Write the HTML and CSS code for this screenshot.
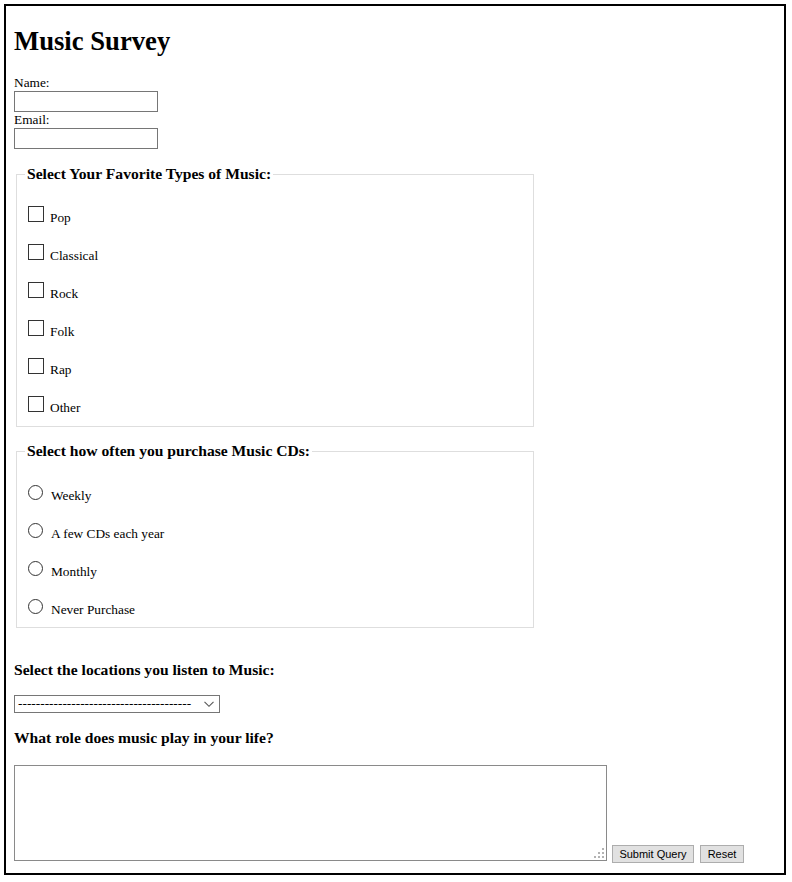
FILE: index.html
```html
<!DOCTYPE html>
<html lang="en">
<head>
<meta charset="utf-8">
<title>Music Survey</title>
<link rel="stylesheet" href="styles.css">
</head>
<body>
<div class="page">
  <h1 class="title">Music Survey</h1>
  <label class="field-label" for="name">Name:</label>
  <input class="text-input" id="name" type="text">
  <label class="field-label" for="email">Email:</label>
  <input class="text-input" id="email" type="text">

  <fieldset class="group group-check">
    <legend class="group-title">Select Your Favorite Types of Music:</legend>
    <div class="options options-check">
      <label class="option"><input class="box" type="checkbox"><span class="opt-text">Pop</span></label>
      <label class="option"><input class="box" type="checkbox"><span class="opt-text">Classical</span></label>
      <label class="option"><input class="box" type="checkbox"><span class="opt-text">Rock</span></label>
      <label class="option"><input class="box" type="checkbox"><span class="opt-text">Folk</span></label>
      <label class="option"><input class="box" type="checkbox"><span class="opt-text">Rap</span></label>
      <label class="option"><input class="box" type="checkbox"><span class="opt-text">Other</span></label>
    </div>
  </fieldset>

  <fieldset class="group group-radio">
    <legend class="group-title">Select how often you purchase Music CDs:</legend>
    <div class="options options-radio">
      <label class="option option-radio"><input class="dot" type="radio" name="freq"><span class="opt-text">Weekly</span></label>
      <label class="option option-radio"><input class="dot" type="radio" name="freq"><span class="opt-text">A few CDs each year</span></label>
      <label class="option option-radio"><input class="dot" type="radio" name="freq"><span class="opt-text">Monthly</span></label>
      <label class="option option-radio"><input class="dot" type="radio" name="freq"><span class="opt-text">Never Purchase</span></label>
    </div>
  </fieldset>

  <h3 class="question q-select">Select the locations you listen to Music:</h3>
  <div class="select-wrap">
    <select class="select">
      <option>---------------------------------------</option>
    </select>
    <svg class="chev" width="11" height="7" viewBox="0 0 11 7"><polyline points="0.5,0.8 5,5.3 9.5,0.8" fill="none" stroke="#555" stroke-width="1.1"/></svg>
  </div>

  <h3 class="question q-text">What role does music play in your life?</h3>
  <div class="answer-row">
    <div class="ta-wrap">
      <textarea class="ta"></textarea>
      <svg class="grip" width="11" height="11" viewBox="0 0 11 11">
        <rect x="8" y="0" width="2" height="2" fill="#b3b3b3"/>
        <rect x="4" y="4" width="2" height="2" fill="#b3b3b3"/>
        <rect x="8" y="4" width="2" height="2" fill="#b3b3b3"/>
        <rect x="0" y="8" width="2" height="2" fill="#b3b3b3"/>
        <rect x="4" y="8" width="2" height="2" fill="#b3b3b3"/>
        <rect x="8" y="8" width="2" height="2" fill="#b3b3b3"/>
      </svg>
    </div>
    <button class="btn btn-submit" type="button">Submit Query</button>
    <button class="btn btn-reset" type="button">Reset</button>
  </div>
</div>
</body>
</html>
```

FILE: styles.css
```css
html, body {
  margin: 0;
  padding: 0;
  background: #fff;
}

body {
  font-family: "Liberation Serif", "Times New Roman", serif;
  font-size: 13.33px;
  color: #000;
}

.page {
  box-sizing: border-box;
  width: 782px;
  height: 871px;
  margin: 4px;
  border: 2px solid #000;
  padding: 0 8px;
  display: flex;
  flex-direction: column;
  align-items: flex-start;
}

.title {
  margin: 20px 0 0 0;
  font-size: 26.67px;
  line-height: 31px;
  font-weight: bold;
}

.field-label {
  display: block;
  margin-top: 18px;
  line-height: 16px;
}

.field-label + .text-input + .field-label {
  margin-top: 0;
}

.text-input {
  box-sizing: border-box;
  width: 144px;
  height: 21px;
  margin: 0;
  border: 1px solid #767676;
  padding: 1px 2px;
  font-family: inherit;
  font-size: 13.33px;
  background: #fff;
}

.group {
  box-sizing: border-box;
  width: 518px;
  margin: 0 0 0 2px;
  border: 1px solid #dedede;
  padding: 23px 8px 14px;
  min-width: 0;
}

.group-check {
  margin-top: 16px;
}

.group-radio {
  margin-top: 15px;
  padding-top: 25px;
  padding-bottom: 13px;
}

.group-title {
  padding: 0 2px;
  font-size: 15.6px;
  line-height: 18px;
  font-weight: bold;
}

.options {
  display: flex;
  flex-direction: column;
  gap: 22px;
}

.options-radio {
  gap: 23px;
}

.option {
  display: flex;
  align-items: baseline;
  height: 16px;
}

.option-radio {
  height: 15px;
}

.opt-text {
  line-height: 16px;
}

.box {
  appearance: none;
  -webkit-appearance: none;
  box-sizing: border-box;
  width: 16px;
  height: 16px;
  margin: 0 6px 0 3px;
  border: 1px solid #333;
  border-radius: 0;
  background: #fff;
  flex: none;
}

.dot {
  appearance: none;
  -webkit-appearance: none;
  box-sizing: border-box;
  width: 15px;
  height: 15px;
  margin: 0 8px 0 3px;
  border: 1px solid #333;
  border-radius: 50%;
  background: #fff;
  flex: none;
}

.question {
  margin: 0;
  font-size: 15.6px;
  line-height: 18px;
  font-weight: bold;
}

.q-select {
  margin-top: 33px;
}

.q-text {
  margin-top: 16px;
}

.select-wrap {
  position: relative;
  margin-top: 16px;
  width: 206px;
  height: 18px;
}

.select {
  appearance: none;
  -webkit-appearance: none;
  box-sizing: border-box;
  width: 206px;
  height: 18px;
  margin: 0;
  border: 1px solid #767676;
  border-radius: 0;
  padding: 0 20px 0 3px;
  font-family: "Liberation Serif", serif;
  font-size: 13.33px;
  line-height: 16px;
  color: #000;
  background: #fff;
}

.chev {
  position: absolute;
  left: 190px;
  top: 6px;
  pointer-events: none;
}

.answer-row {
  margin-top: 18px;
  display: flex;
  align-items: flex-end;
}

.ta-wrap {
  position: relative;
  margin-bottom: 2px;
}

.ta {
  display: block;
  box-sizing: border-box;
  width: 593px;
  height: 96px;
  margin: 0;
  border: 1px solid #8a8a8a;
  padding: 2px;
  resize: none;
  font-family: "Liberation Mono", monospace;
  font-size: 13.33px;
  background: #fff;
}

.grip {
  position: absolute;
  right: 2px;
  bottom: 2px;
  pointer-events: none;
}

.btn {
  box-sizing: border-box;
  height: 18px;
  margin: 0;
  padding: 0;
  border: 1px solid #adadad;
  border-radius: 0;
  background: #e1e1e1;
  color: #000;
  font-family: "Liberation Sans", Arial, sans-serif;
  font-size: 11px;
  line-height: 16px;
  text-align: center;
}

.btn-submit {
  width: 82px;
  margin-left: 5px;
}

.btn-reset {
  width: 44px;
  margin-left: 6px;
}
```
